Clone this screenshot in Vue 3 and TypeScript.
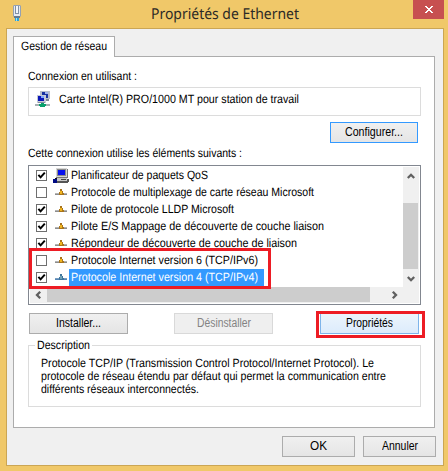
<script setup lang="ts">
import { ref, type Directive } from 'vue'

interface NetItem {
  label: string
  width: number
  checked: boolean
  kind: 'computer' | 'protocol'
  selected?: boolean
}

const items = ref<NetItem[]>([
  { label: 'Planificateur de paquets QoS', width: 137, checked: true, kind: 'computer' },
  { label: 'Protocole de multiplexage de carte réseau Microsoft', width: 243, checked: false, kind: 'protocol' },
  { label: 'Pilote de protocole LLDP Microsoft', width: 163, checked: true, kind: 'protocol' },
  { label: 'Pilote E/S Mappage de découverte de couche liaison', width: 253, checked: true, kind: 'protocol' },
  { label: 'Répondeur de découverte de couche de liaison', width: 226, checked: true, kind: 'protocol' },
  { label: 'Protocole Internet version 6 (TCP/IPv6)', width: 187, checked: false, kind: 'protocol' },
  { label: 'Protocole Internet version 4 (TCP/IPv4)', width: 187, checked: true, kind: 'protocol', selected: true },
])

const description = [
  { text: 'Protocole TCP/IP (Transmission Control Protocol/Internet Protocol). Le', width: 333 },
  { text: 'protocole de réseau étendu par défaut qui permet la communication entre', width: 345 },
  { text: 'différents réseaux interconnectés.', width: 158 },
]

// Condenses a label horizontally so that it takes the given width.
const vFit: Directive<HTMLElement, number> = {
  mounted(el, { value }) {
    const natural = el.getBoundingClientRect().width
    if (!natural) return
    el.style.display = 'inline-block'
    el.style.textAlign = 'left'
    el.style.width = `${value}px`
    el.style.transformOrigin = 'left center'
    el.style.transform = `scaleX(${(value / natural).toFixed(4)})`
  },
}
</script>

<template>
  <div class="window">
    <header class="titlebar">
      <svg class="app-icon" width="10" height="17" viewBox="0 0 10 17">
        <path d="M2 0h6l1 1v10l-1 1H2l-1-1V1z" fill="#94a1b4" />
        <path d="M2 1h6v10H2z" fill="#e6ebf1" />
        <path d="M3 1h4v8H3z" fill="#8090a6" />
        <path d="M4 1h2v7H4z" fill="#f4f7fa" />
        <path d="M2 11h6v2H2z" fill="#667a8f" />
        <path d="M3 13h4v3H3z" fill="#2ba2da" />
        <path d="M4 13h1v3H4z" fill="#9de3f7" />
      </svg>
      <h1><span v-fit="148">Propriétés de Ethernet</span></h1>
      <button class="close" aria-label="Fermer">
        <svg width="8" height="7" viewBox="0 0 8 7" shape-rendering="crispEdges">
          <path d="M0 0h2v1H0zM6 0h2v1H6zM1 1h2v1H1zM5 1h2v1H5zM2 2h4v1H2zM3 3h2v1H3zM2 4h4v1H2zM1 5h2v1H1zM5 5h2v1H5zM0 6h2v1H0zM6 6h2v1H6z" fill="#fff" />
        </svg>
      </button>
    </header>

    <main class="dialog">
      <div class="tab"><span v-fit="86">Gestion de réseau</span></div>
      <section class="panel">
        <p class="label first"><span v-fit="109">Connexion en utilisant :</span></p>
        <div class="adapter">
          <svg width="16" height="17" viewBox="0 0 16 17" shape-rendering="crispEdges">
            <path d="M5 0h10v8H5z" fill="#b7bdcb" />
            <path d="M7 1h6v6H7z" fill="#17309f" />
            <path d="M10 1h3v2h-3z" fill="#9eb2ee" />
            <path d="M11 8h3v2h-3z" fill="#7f8795" />
            <path d="M2 4h9v8H2z" fill="#c5cad6" />
            <path d="M3 5h6v5H3z" fill="#0b16b8" />
            <path d="M6 5h3v2H6z" fill="#80a6fa" />
            <path d="M3 11h7v1H3z" fill="#858c9c" />
            <path d="M0 13h15v2H0z" fill="#a8b1b4" />
            <path d="M6 12h3v1H6zM4 13h7v2H4zM5 15h5v1H5z" fill="#08a06b" />
          </svg>
          <span v-fit="240">Carte Intel(R) PRO/1000 MT pour station de travail</span>
        </div>
        <div class="configure-row">
          <button class="btn focus configure"><span v-fit="58">Configurer...</span></button>
        </div>
        <p class="label second"><span v-fit="214">Cette connexion utilise les éléments suivants :</span></p>

        <div class="list">
          <div class="list-body">
            <ul>
              <li v-for="item in items" :key="item.label" :class="{ selected: item.selected }">
                <span class="check">
                  <svg v-if="item.checked" width="9" height="9" viewBox="0 0 9 9">
                    <path d="M1.4 3.8 3.6 6.3 7.8 1.6" fill="none" stroke="#000" stroke-width="2" />
                  </svg>
                </span>
                <svg v-if="item.kind === 'computer'" class="computer" width="16" height="17" viewBox="0 0 16 17" shape-rendering="crispEdges">
                  <path d="M3 1h11v1h1v9H3z" fill="#777" />
                  <path d="M3 1h11v9H3z" fill="#d5d5d5" />
                  <path d="M4 2h9v7H4z" fill="#8a8a8a" />
                  <path d="M5 3h7v5H5z" fill="#0610ee" />
                  <path d="M2 11h12v1h2v3h-1v1H3z" fill="#555" />
                  <path d="M3 11h11v3H3z" fill="#c8c8c8" />
                  <path d="M8 12h5v1H8z" fill="#444" />
                  <path d="M0 12h4v4H0z" fill="#000a82" />
                  <path d="M2 11h2v1H2z" fill="#111" />
                </svg>
                <svg v-else class="protocol" width="12" height="7" viewBox="0 0 12 7" shape-rendering="crispEdges">
                  <path d="M0 4h12v2H0z" :fill="item.selected ? '#7a9fc1' : '#b4b4b4'" />
                  <path d="M0 5h12v1H0z" :fill="item.selected ? '#5585b5' : '#8d8d8d'" />
                  <path d="M5 0h2v2h1v2h1v2H4V3h1z" :fill="item.selected ? '#40769d' : '#a8741c'" />
                  <path d="M5 2h2v3H5z" :fill="item.selected ? '#72a5b7' : '#f1b51e'" />
                </svg>
                <span class="name"><span v-fit="item.width">{{ item.label }}</span></span>
              </li>
            </ul>
            <div class="vscroll">
              <svg width="8" height="7" viewBox="0 0 8 7"><path d="M.8 5 4 1.8 7.2 5" fill="none" stroke="#606060" stroke-width="2.3" /></svg>
              <div class="thumb"></div>
              <svg width="8" height="7" viewBox="0 0 8 7"><path d="M.8 2 4 5.2 7.2 2" fill="none" stroke="#606060" stroke-width="2.3" /></svg>
            </div>
          </div>
          <div class="hscroll">
            <svg width="7" height="8" viewBox="0 0 7 8"><path d="M5.2.8 2 4l3.2 3.2" fill="none" stroke="#606060" stroke-width="2.3" /></svg>
            <div class="thumb"></div>
            <svg width="7" height="8" viewBox="0 0 7 8"><path d="M1.8.8 5 4 1.8 7.2" fill="none" stroke="#606060" stroke-width="2.3" /></svg>
          </div>
          <div class="mark mark-items"></div>
        </div>

        <div class="actions">
          <button class="btn"><span v-fit="45">Installer...</span></button>
          <button class="btn disabled" disabled><span v-fit="54">Désinstaller</span></button>
          <div class="marked">
            <button class="btn hot"><span v-fit="47">Propriétés</span></button>
            <div class="mark mark-button"></div>
          </div>
        </div>

        <div class="group">
          <div class="legend"><i></i><span class="legend-text"><span v-fit="53">Description</span></span><b></b></div>
          <div class="group-body">
            <p v-for="line in description" :key="line.text"><span v-fit="line.width">{{ line.text }}</span></p>
          </div>
        </div>
      </section>
      <footer>
        <button class="btn"><span v-fit="17">OK</span></button>
        <button class="btn"><span v-fit="36">Annuler</span></button>
      </footer>
    </main>
  </div>
</template>

<style>
body { margin: 0; background: #f0c869; }
</style>

<style scoped>
* { box-sizing: border-box; }
.window { width: 448px; height: 471px; overflow: hidden; background: #f0c869; font: 12px/15px "Liberation Sans", Arial, sans-serif; color: #000; text-rendering: geometricPrecision; white-space: nowrap; }
svg { display: block; flex: none; }
p, h1, ul { margin: 0; padding: 0; }
.titlebar { height: 28px; display: flex; align-items: flex-start; padding: 0 4px 0 12px; }
.app-icon { margin-top: 5px; }
h1 { flex: 1; padding-left: 129px; font: 15px/28px "Noto Sans", "Open Sans", sans-serif; color: #2c2a26; }
.close { width: 31px; height: 19px; flex: none; border: 0; padding: 0 0 0 1px; background: #c75050; display: flex; align-items: center; justify-content: center; }
.dialog { width: 438px; height: 438px; margin-left: 6px; border: 1px solid #cba654; background: #f0f0f0; padding: 7px 6px 0; }
.tab { position: relative; z-index: 1; width: 102px; height: 21px; padding: 2px 0 0 7px; border: 1px solid #acacac; border-bottom: 0; background: #fff; }
.panel { width: 422px; height: 372px; margin-top: -1px; padding: 12px 13px 0 14px; border: 1px solid #acacac; background: #fff; }
.label { height: 15px; }
.adapter { height: 29px; margin-top: 3px; border: 1px solid #dcdcdc; display: flex; align-items: center; padding: 0 0 2px 6px; gap: 8px; }
.adapter svg { margin-top: -2px; }
.adapter span { margin-top: -2px; }
.configure-row { display: flex; justify-content: flex-end; margin-top: 6px; padding-right: 3px; }
.btn { width: 99px; height: 21px; padding: 0; border: 1px solid #acacac; background: linear-gradient(#f0f0f0, #e5e5e5); font: inherit; line-height: 19px; color: #000; text-align: center; white-space: nowrap; }
.btn.focus { border-color: #3399ff; }
.configure { width: 88px; }
.btn.disabled { border-color: #d9d9d9; background: #efefef; color: #838383; }
.btn.hot { display: block; border-color: #7eb4ea; background: linear-gradient(#ecf4fc, #dcecfc); }
.second { margin-top: 3px; }
.list { position: relative; width: 393px; height: 140px; margin-top: 4px; padding: 1px; border: 1px solid #828790; }
.list-body { display: flex; height: 120px; }
ul { flex: 1; list-style: none; }
li { display: flex; align-items: center; height: 17px; padding-left: 6px; }
.check { width: 11px; height: 11px; border: 1px solid #6f6f6f; flex: none; margin-top: -1px; }
.computer { margin: 0 0 0 6px; }
.protocol { margin: 0 2px 0 8px; }
.name { height: 17px; line-height: 17px; padding: 0 6px 0 2px; }
.selected .name { background: #3399ff; color: #fff; }
.vscroll { width: 16px; background: #f0f0f0; display: flex; flex-direction: column; align-items: center; padding-top: 6px; }
.vscroll .thumb { width: 15px; height: 66px; margin: 23px 1px 6px 0; background: #cdcdcd; }
.hscroll { display: flex; align-items: center; height: 16px; background: #f0f0f0; padding-left: 5px; }
.hscroll .thumb { width: 323px; height: 15px; margin: 0 21px 1px 5px; background: #cdcdcd; }
.mark { position: absolute; border: 3px solid #ed1c24; pointer-events: none; }
.mark-items { left: 0; top: 82px; width: 242px; height: 41px; }
.actions { display: flex; gap: 46px; padding: 8px 0 0 1px; }
.marked { position: relative; margin-left: 1px; }
.mark-button { left: -4px; top: -2px; width: 109px; height: 27px; }
.group { height: 69px; margin-top: 4px; }
.legend { display: flex; align-items: center; height: 15px; }
.legend i { width: 7px; height: 1px; background: #dcdcdc; }
.legend-text { padding: 0 2px; width: 57px; }
.legend b { flex: 1; height: 1px; background: #dcdcdc; }
.group-body { height: 62px; margin-top: -8px; padding: 12px 0 0 12px; border: 1px solid #dcdcdc; border-top: 0; line-height: 13px; }
footer { display: flex; justify-content: flex-end; gap: 8px; padding: 8px 0 0; margin-right: 1px; }
footer .btn { width: 73px; }
</style>
